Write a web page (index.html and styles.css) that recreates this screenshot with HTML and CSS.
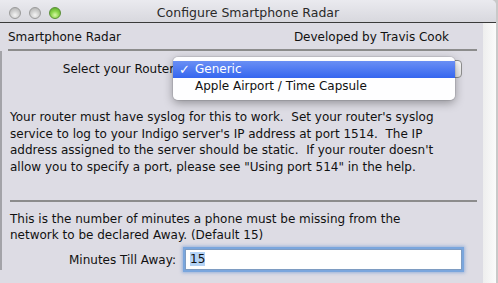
FILE: index.html
```html
<!DOCTYPE html>
<html>
<head>
<meta charset="utf-8">
<link rel="stylesheet" href="styles.css">
</head>
<body>
<div class="window">
  <div class="titlebar">
    <div class="lights">
      <span class="light grey"></span>
      <span class="light grey"></span>
      <span class="light green"></span>
    </div>
    <div class="title">Configure Smartphone Radar</div>
  </div>
  <div class="main">
    <div class="content">
      <div class="header">
        <span>Smartphone Radar</span>
        <span>Developed by Travis Cook</span>
      </div>
      <div class="body">
        <div class="select-row">
          <div class="label">Select your Router:</div>
          <div class="popup-wrap">
            <div class="popup-btn"></div>
            <div class="menu">
              <div class="item selected"><span class="check">✓</span>Generic</div>
              <div class="item">Apple Airport / Time Capsule</div>
            </div>
          </div>
        </div>
        <p class="para first">Your router must have syslog for this to work.&nbsp; Set your router's syslog service to log to your Indigo server's IP address at port 1514.&nbsp; The IP address assigned to the server should be static.&nbsp; If your router doesn't allow you to specify a port, please see "Using port 514" in the help.</p>
        <div class="sep"></div>
        <p class="para second">This is the number of minutes a phone must be missing from the network to be declared Away. (Default 15)</p>
        <div class="input-row">
          <div class="label">Minutes Till Away:</div>
          <div class="field"><span class="sel">15</span></div>
        </div>
      </div>
    </div>
    <div class="strip"></div>
  </div>
</div>
</body>
</html>
```
FILE: styles.css
```css
html, body {
  margin: 0;
  padding: 0;
}
body {
  width: 498px;
  height: 283px;
  overflow: hidden;
  background: #c9c9c9;
  font-family: "DejaVu Sans", sans-serif;
  font-size: 12px;
  color: #111;
}
.window {
  width: 496px;
  height: 283px;
  display: flex;
  flex-direction: column;
  background: #dddce4;
  border-top-right-radius: 5px;
  overflow: hidden;
}
.titlebar {
  height: 22px;
  flex: none;
  position: relative;
  background: linear-gradient(#eaeaef, #d8d8de);
  border-bottom: 1px solid #3a3a3a;
  display: flex;
  align-items: center;
  justify-content: center;
}
.lights {
  position: absolute;
  left: 9px;
  top: 7px;
  display: flex;
  gap: 8px;
}
.light {
  width: 12px;
  height: 12px;
  border-radius: 50%;
  box-sizing: border-box;
}
.light.grey {
  background: radial-gradient(circle at 50% 70%, #f4f4f4 0%, #d2d2d2 45%, #a9a9a9 100%);
  border: 1px solid #9a9a9a;
}
.light.green {
  background: radial-gradient(circle at 50% 70%, #d8f7a8 0%, #8cd64c 45%, #4f9d24 100%);
  border: 1px solid #5a8f36;
}
.title {
  font-size: 12.5px;
  color: #2a2a2a;
  margin-top: 2px;
}
.main {
  flex: 1;
  display: flex;
}
.content {
  width: 481px;
  padding-left: 2px;
}
.strip {
  width: 13px;
  background: linear-gradient(90deg, #eeeeee, #fbfbfb);
}
.header {
  margin: 7px 6px 0 6px;
  height: 19px;
  display: flex;
  justify-content: space-between;
  padding-right: 28px;
  border-bottom: 2px solid #8c8c8c;
}
.body {
  margin-left: -2px;
  border-left: 2px solid #a3a3a8;
}
.select-row {
  display: flex;
  height: 58px;
  padding-top: 8px;
  box-sizing: border-box;
}
.select-row .label {
  width: 176px;
  text-align: right;
  padding-top: 3px;
  white-space: nowrap;
  overflow: hidden;
}
.popup-wrap {
  position: relative;
  margin-left: -3px;
}
.popup-btn {
  width: 287px;
  height: 18px;
  margin-top: 1px;
  border: 1px solid #8f8f8f;
  border-radius: 4px;
  background: linear-gradient(#fdfdfd, #e6e6e6);
  box-sizing: border-box;
}
.menu {
  position: absolute;
  left: -2px;
  top: -2px;
  width: 282px;
  padding: 4px 0 5px;
  background: rgba(255, 255, 255, 0.97);
  border-radius: 5px;
  box-shadow: 0 3px 10px rgba(0, 0, 0, 0.35), 0 0 0 1px rgba(0, 0, 0, 0.08);
}
.item {
  height: 17px;
  line-height: 17px;
  padding-left: 22px;
  position: relative;
  color: #111;
}
.item.selected {
  background: linear-gradient(#6a8ff4, #3566ef);
  color: #fff;
}
.check {
  position: absolute;
  left: 6px;
  font-size: 13px;
  font-weight: bold;
}
.para {
  margin: 0 6px 0 8px;
  width: 448px;
  line-height: 16.5px;
}
.para.first {
  height: 86px;
}
.sep {
  margin: 5px 6px 0 8px;
  border-top: 2px solid #8c8c8c;
}
.para.second {
  margin-top: 9px;
  width: 430px;
  line-height: 16px;
}
.input-row {
  display: flex;
  margin-top: 6px;
  align-items: center;
}
.input-row .label {
  width: 174px;
  text-align: right;
}
.field {
  margin-left: 9px;
  width: 277px;
  height: 21px;
  box-sizing: border-box;
  background: #fff;
  border: 1px solid #7e9cc2;
  box-shadow: 0 0 0 2px #7aa6dd, 0 0 3px 3px rgba(90, 140, 210, 0.5);
  padding: 2px 4px;
  line-height: 15px;
}
.sel {
  background: #b4d3f5;
}
```
